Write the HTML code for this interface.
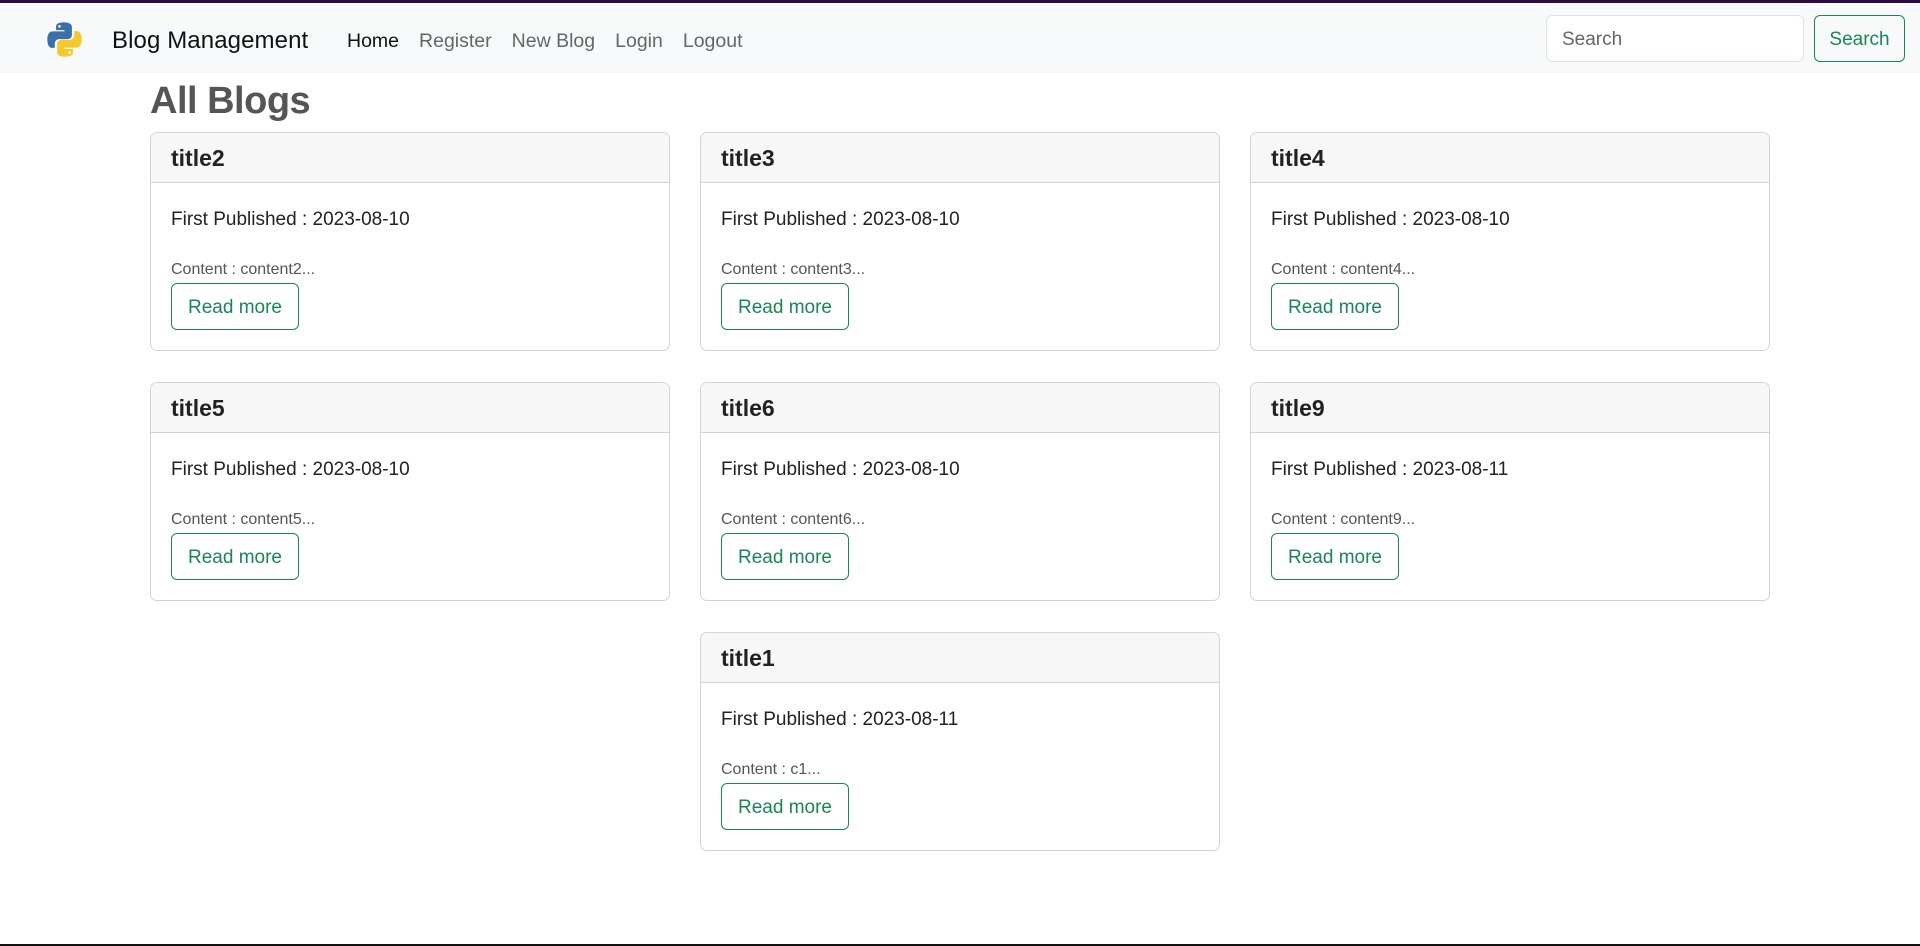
<!DOCTYPE html>
<html><head><meta charset="utf-8"><style>
*{box-sizing:border-box;margin:0;padding:0}
body{width:1920px;height:946px;background:#fff;font-family:"Liberation Sans",sans-serif;position:relative;overflow:hidden;border-top:3px solid #2e0a3e;border-bottom:2px solid #111}
.nav{position:absolute;top:0;left:0;width:1920px;height:70px;background:#f8f9fa}
.brand{position:absolute;left:112px;top:24px;font-size:24px;color:#111;letter-spacing:0.1px}
.links{position:absolute;left:347px;top:27px;font-size:19.5px;color:#666;letter-spacing:0}
.links span{margin-right:20px}
.inp{position:absolute;left:1546px;top:12px;width:258px;height:47px;border:1px solid #dee2e6;border-radius:6px;background:#fff;font-size:19px;color:#666;padding:13px 15px}
.btn2{position:absolute;left:1814px;top:12px;width:91px;height:47px;border:1px solid #198754;border-radius:6px;color:#198754;font-size:19px;padding:13px 0;text-align:center}
h1{position:absolute;left:150px;top:77px;font-size:38px;color:#555;font-weight:bold;letter-spacing:-0.5px}
.card{position:absolute;width:520px;height:219px;border:1px solid #d4d4d4;border-radius:7px;overflow:hidden}
.hd{height:50px;background:#f7f7f7;border-bottom:1px solid #d4d4d4;font-size:23px;font-weight:bold;color:#222;padding:12px 20px}
.p1{position:absolute;left:20px;top:76px;font-size:19px;color:#222}
.p2{position:absolute;left:20px;top:128px;font-size:16px;color:#555}
.rm{position:absolute;left:20px;top:150px;width:128px;height:47px;border:1px solid #198754;border-radius:6px;color:#198754;font-size:19px;text-align:center;padding:13px 0}
</style></head><body>
<div class="nav">
<svg style="position:absolute;left:46px;top:18px" width="37" height="37" viewBox="0 0 110 110"><path d="M54 4c-25 0-24 11-24 11v12h25v4H20S4 29 4 55s14 25 14 25h8V68s0-14 14-14h24s13 0 13-13V18S79 4 54 4zM40 12a4 4 0 110 8 4 4 0 010-8z" fill="#3a70a5"/><path d="M56 106c25 0 24-11 24-11V83H55v-4h35s16 2 16-24-14-25-14-25h-8v12s0 14-14 14H46s-13 0-13 13v23s-2 14 23 14zm14-8a4 4 0 110-8 4 4 0 010 8z" fill="#f5c92c"/></svg>
<div class="brand">Blog Management</div>
<div class="links"><span style="color:#111">Home</span><span>Register</span><span>New Blog</span><span>Login</span><span>Logout</span></div>
<div class="inp">Search</div>
<div class="btn2">Search</div>
</div>
<h1>All Blogs</h1>

<div class="card" style="left:150px;top:129px"><div class="hd">title2</div><div class="p1">First Published : 2023-08-10</div><div class="p2">Content : content2...</div><div class="rm">Read more</div></div>
<div class="card" style="left:700px;top:129px"><div class="hd">title3</div><div class="p1">First Published : 2023-08-10</div><div class="p2">Content : content3...</div><div class="rm">Read more</div></div>
<div class="card" style="left:1250px;top:129px"><div class="hd">title4</div><div class="p1">First Published : 2023-08-10</div><div class="p2">Content : content4...</div><div class="rm">Read more</div></div>

<div class="card" style="left:150px;top:379px"><div class="hd">title5</div><div class="p1">First Published : 2023-08-10</div><div class="p2">Content : content5...</div><div class="rm">Read more</div></div>
<div class="card" style="left:700px;top:379px"><div class="hd">title6</div><div class="p1">First Published : 2023-08-10</div><div class="p2">Content : content6...</div><div class="rm">Read more</div></div>
<div class="card" style="left:1250px;top:379px"><div class="hd">title9</div><div class="p1">First Published : 2023-08-11</div><div class="p2">Content : content9...</div><div class="rm">Read more</div></div>

<div class="card" style="left:700px;top:629px"><div class="hd">title1</div><div class="p1">First Published : 2023-08-11</div><div class="p2">Content : c1...</div><div class="rm">Read more</div></div>
</body></html>
